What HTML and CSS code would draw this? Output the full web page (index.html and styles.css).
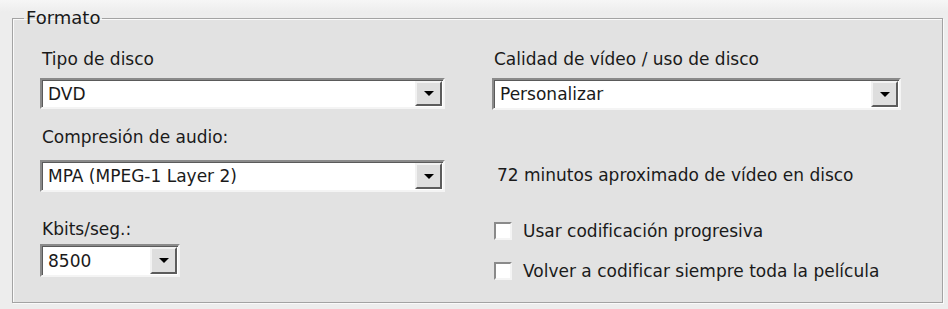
FILE: index.html
```html
<!DOCTYPE html>
<html lang="es">
<head>
  <meta charset="UTF-8" />
  <title>Formato</title>
  <link rel="stylesheet" href="styles.css">
</head>
<body>
  <fieldset class="grupo">
    <legend>Formato</legend>

    <div class="columna">
      <label class="etiqueta">Tipo de disco</label>
      <div class="combo combo-ancho">
        <span class="valor">DVD</span>
        <span class="flecha"></span>
      </div>

      <label class="etiqueta etiqueta-audio">Compresión de audio:</label>
      <div class="combo combo-ancho combo-audio">
        <span class="valor">MPA (MPEG-1 Layer 2)</span>
        <span class="flecha"></span>
      </div>

      <label class="etiqueta etiqueta-kbits">Kbits/seg.:</label>
      <div class="combo combo-corto">
        <span class="valor">8500</span>
        <span class="flecha"></span>
      </div>
    </div>

    <div class="columna">
      <label class="etiqueta">Calidad de vídeo / uso de disco</label>
      <div class="combo combo-calidad">
        <span class="valor">Personalizar</span>
        <span class="flecha"></span>
      </div>

      <p class="info">72 minutos aproximado de vídeo en disco</p>

      <label class="check">
        <span class="caja"></span>
        Usar codificación progresiva
      </label>
      <label class="check">
        <span class="caja"></span>
        Volver a codificar siempre toda la película
      </label>
    </div>
  </fieldset>
</body>
</html>
```

FILE: styles.css
```css
body {
  margin: 0;
  padding: 8px 5px 6px 12px;
  background: linear-gradient(#f6f6f6, #ededed 12px);
  font-family: Tahoma, "DejaVu Sans", sans-serif;
  font-size: 17px;
  color: #1a1a1a;
}
.grupo {
  margin: 0;
  height: 295px;
  box-sizing: border-box;
  padding: 0 0 0 27px;
  border: 1px solid #a3a3a3;
  box-shadow: inset 1px 1px 0 #fafafa, 1px 1px 0 #fafafa;
  background: #e2e2e2;
  display: grid;
  grid-template-columns: 425px 409px;
  column-gap: 27px;
}
legend {
  padding: 0 2px;
  margin-left: -16px;
  font-size: 18px;
  line-height: 20px;
}
.columna {
  display: flex;
  flex-direction: column;
  align-items: flex-start;
}
.columna > * {
  flex-shrink: 0;
}
.etiqueta {
  margin: 21px 0 9px 2px;
  line-height: 20px;
}
.etiqueta-audio {
  margin: 18px 0 13px 2px;
}
.etiqueta-kbits {
  margin: 27px 0 5px 2px;
}
.combo {
  display: flex;
  height: 31px;
  box-sizing: border-box;
  background: #fff;
  border: 2px solid;
  border-color: #8a8a8a #f4f4f4 #f4f4f4 #8a8a8a;
  box-shadow: inset 1px 1px 0 #5a5a5a;
}
.combo-ancho {
  width: 405px;
}
.combo-audio {
  height: 32px;
}
.combo-calidad {
  width: 409px;
  height: 32px;
}
.combo-corto {
  width: 140px;
  height: 33px;
}
.valor {
  flex: 1;
  padding: 0 6px;
  display: flex;
  align-items: center;
}
.flecha {
  width: 27px;
  margin: 1px;
  box-sizing: border-box;
  background: #dedede;
  border: 2px solid;
  border-color: #f2f2f2 #5c5c5c #5c5c5c #f2f2f2;
  display: flex;
  align-items: center;
  justify-content: center;
}
.flecha::after {
  content: "";
  border-left: 5px solid transparent;
  border-right: 5px solid transparent;
  border-top: 5px solid #000;
}
.info {
  margin: 55px 0 0 5px;
  line-height: 20px;
}
.check {
  display: flex;
  align-items: center;
  gap: 11px;
  margin: 36px 0 0 2px;
  line-height: 20px;
}
.check + .check {
  margin-top: 20px;
}
.caja {
  width: 18px;
  height: 18px;
  box-sizing: border-box;
  background: #fff;
  border: 2px solid;
  border-color: #8a8a8a #f4f4f4 #f4f4f4 #8a8a8a;
}
```
